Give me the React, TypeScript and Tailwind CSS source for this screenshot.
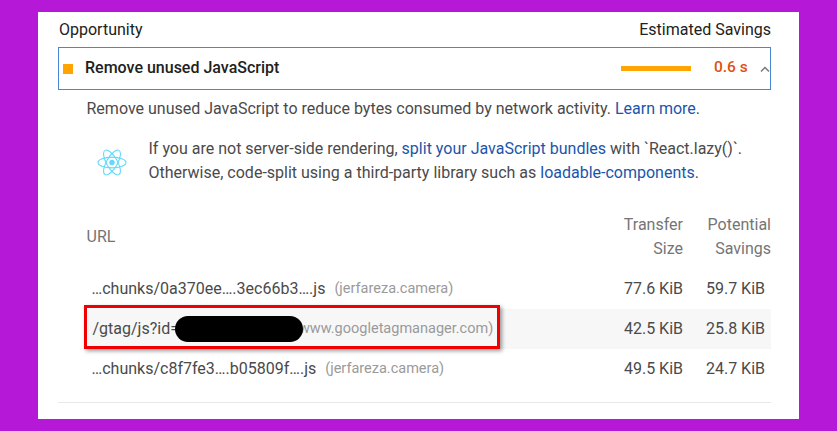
export default function App() {
  const rows = [
    { url: '…chunks/0a370ee….3ec66b3….js', host: '(jerfareza.camera)', size: '77.6 KiB', save: '59.7 KiB' },
    { url: '/gtag/js?id=', host: 'www.googletagmanager.com)', size: '42.5 KiB', save: '25.8 KiB', marked: true },
    { url: '…chunks/c8f7fe3….b05809f….js', host: '(jerfareza.camera)', size: '49.5 KiB', save: '24.7 KiB' },
  ];

  return (
    <div className="h-[431px] w-[837px] overflow-hidden bg-[#b618d8] px-[38px] pt-3 font-['Roboto',sans-serif] text-base text-[#4a4a4a]">
      <div className="h-[407px] w-[761px] bg-white pl-5 pr-7">
        {/* Header */}
        <div className="flex h-[35px] items-center justify-between pl-px text-[#212121]">
          <span>Opportunity</span>
          <span>Estimated Savings</span>
        </div>

        {/* Audit row */}
        <div className="flex h-[43px] items-center border border-[#4a86d8] pl-1">
          <div className="h-2.5 w-2.5 bg-[#ffa400]" />
          <span className="ml-3 pb-0.5 font-medium text-[#212121]">Remove unused JavaScript</span>
          <div className="ml-auto h-[5px] w-[70px] bg-[#ffa400]" />
          <span className="ml-[23px] w-[35px] pb-0.5 text-[15.5px] font-medium text-[#e0500e]">0.6 s</span>
          <svg className="ml-[11px]" width="10" height="6" viewBox="0 0 10 6" fill="none">
            <path d="M1 5.5 L5 1.5 L9 5.5" stroke="#757575" strokeWidth="1.4" />
          </svg>
        </div>

        <div className="pl-[28.5px]">
          <p className="mt-[7px] leading-6">
            Remove unused JavaScript to reduce bytes consumed by network activity.{' '}
            <span className="text-[#1a55ab]">Learn more</span>.
          </p>

          {/* Stack pack note */}
          <div className="mt-[9px] flex h-[62px] items-center">
            <svg className="ml-2.5 mt-0.5 shrink-0" width="30" height="27" viewBox="-15 -13.5 30 27" fill="none" stroke="#61dafb" strokeWidth="1.1">
              <circle r="2.7" fill="#61dafb" stroke="none" />
              <ellipse rx="14" ry="5.4" />
              <ellipse rx="14" ry="5.4" transform="rotate(60)" />
              <ellipse rx="14" ry="5.4" transform="rotate(120)" />
            </svg>
            <p className="ml-[22px] whitespace-nowrap leading-6">
              If you are not server-side rendering, <span className="text-[#1a55ab]">split your JavaScript bundles</span> with `React.lazy()`.
              <br />
              Otherwise, code-split using a third-party library such as <span className="text-[#1a55ab]">loadable-components</span>.
            </p>
          </div>

          {/* Table header */}
          <div className="mt-4 flex h-[58px] items-center text-[#757575]">
            <span>URL</span>
            <span className="ml-auto w-[62px] text-right leading-6">Transfer Size</span>
            <span className="ml-[22px] w-[66px] text-right leading-6">Potential Savings</span>
          </div>

          {/* Table rows */}
          <div className="mt-[3px] border-b border-transparent">
            {rows.map((row) => (
              <div key={row.url} className={`relative flex h-10 items-center ${row.marked ? 'bg-[#f7f7f7]' : ''}`}>
                <span className={`whitespace-nowrap ${row.marked ? 'ml-1.5' : 'ml-[5px]'}`}>{row.url}</span>
                {row.marked ? (
                  <>
                    <span className="relative z-10 -ml-1 h-[26px] w-[128px] shrink-0 rounded-[13px] bg-black" />
                    <span className="-ml-1 whitespace-nowrap text-[14.5px] text-[#9a9a9a]">{row.host}</span>
                    <div className="absolute top-[-4px] left-[-3px] h-11 w-[416px] border-[3px] border-[#f00000] shadow-[2px_2px_4px_rgba(0,0,0,0.4)]" />
                  </>
                ) : (
                  <span className="ml-[9px] whitespace-nowrap text-[14.5px] text-[#9a9a9a]">{row.host}</span>
                )}
                <span className="ml-auto w-[62px] text-right">{row.size}</span>
                <span className="ml-[22px] w-[66px] pr-[6px] text-right">{row.save}</span>
              </div>
            ))}
          </div>
        </div>

        <div className="mt-3 border-t border-[#e8e8e8]" />
      </div>
    </div>
  );
}
